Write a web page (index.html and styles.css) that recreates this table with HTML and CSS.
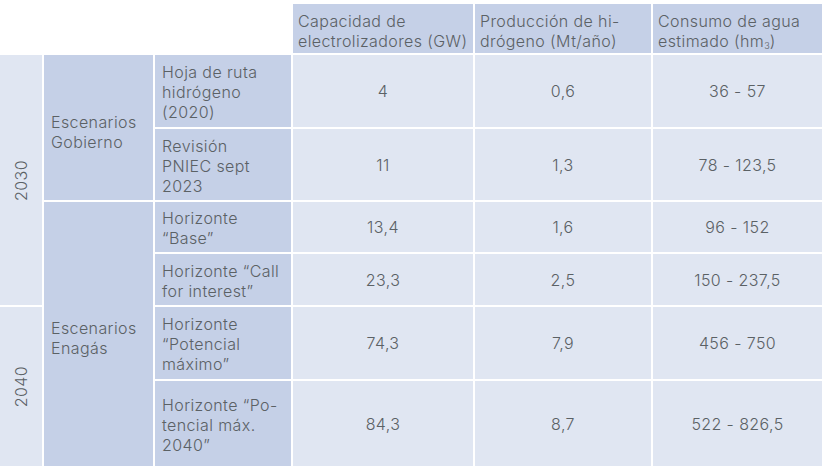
FILE: index.html
```html
<!DOCTYPE html>
<html lang="es">
<head>
<meta charset="utf-8">
<title>Escenarios de hidrógeno</title>
<link rel="stylesheet" href="styles.css">
</head>
<body>
<div class="table">
  <div class="blank"></div>
  <div class="cell head"><span>Capacidad de<br>electrolizadores (GW)</span></div>
  <div class="cell head"><span>Producción de hi-<br>drógeno (Mt/año)</span></div>
  <div class="cell head"><span>Consumo de agua<br>estimado (hm<span class="sub">3</span>)</span></div>

  <div class="cell year y2030"><span class="vert">2030</span></div>
  <div class="cell scen gob"><span>Escenarios<br>Gobierno</span></div>
  <div class="cell label"><span>Hoja de ruta<br>hidrógeno<br>(2020)</span></div>
  <div class="cell data">4</div>
  <div class="cell data">0,6</div>
  <div class="cell data">36 - 57</div>

  <div class="cell label"><span>Revisión<br>PNIEC sept<br>2023</span></div>
  <div class="cell data">11</div>
  <div class="cell data">1,3</div>
  <div class="cell data">78 - 123,5</div>

  <div class="cell scen ena"><span>Escenarios<br>Enagás</span></div>
  <div class="cell label"><span>Horizonte<br>“Base”</span></div>
  <div class="cell data">13,4</div>
  <div class="cell data">1,6</div>
  <div class="cell data">96 - 152</div>

  <div class="cell label"><span>Horizonte “Call<br>for interest”</span></div>
  <div class="cell data">23,3</div>
  <div class="cell data">2,5</div>
  <div class="cell data">150 - 237,5</div>

  <div class="cell year y2040"><span class="vert">2040</span></div>
  <div class="cell label"><span>Horizonte<br>“Potencial<br>máximo”</span></div>
  <div class="cell data">74,3</div>
  <div class="cell data">7,9</div>
  <div class="cell data">456 - 750</div>

  <div class="cell label"><span>Horizonte “Po-<br>tencial máx.<br>2040”</span></div>
  <div class="cell data">84,3</div>
  <div class="cell data">8,7</div>
  <div class="cell data">522 - 826,5</div>
</div>
</body>
</html>
```

FILE: styles.css
```css
html, body {
  margin: 0;
  padding: 0;
  background: #ffffff;
}

body {
  font-family: "Inter", "Noto Sans", sans-serif;
  font-size: 16px;
  line-height: 20px;
  letter-spacing: 0.4px;
  color: #5b6165;
  font-weight: 300;
}

.table {
  display: grid;
  grid-template-columns: 42px 109px 136px 180px 176px 169px;
  grid-template-rows: 49px 72px 71px 50px 51px 72px 85px;
  gap: 2px;
  margin-top: 4px;
  width: 822px;
}

.blank {
  grid-column: span 3;
}

.cell {
  display: flex;
  align-items: center;
  box-sizing: border-box;
}

.head {
  background: #c5d0e7;
  padding: 5px 5px 0 5px;
}

.sub {
  font-size: 9px;
  line-height: 1;
  letter-spacing: 0;
  position: relative;
  top: 2px;
}

.year {
  background: #e0e6f2;
  justify-content: center;
}

.y2030 {
  grid-row: span 4;
}

.y2040 {
  grid-row: span 2;
}

.vert {
  writing-mode: vertical-rl;
  transform: rotate(180deg);
}

.scen {
  background: #c5d0e7;
  padding-left: 7px;
}

.gob {
  grid-row: span 2;
  padding-top: 8px;
}

.ena {
  grid-row: span 4;
  padding-top: 8px;
}

.label {
  background: #c5d0e7;
  padding-left: 7px;
  padding-top: 2px;
}

.data {
  background: #e0e6f2;
  justify-content: center;
}
```
